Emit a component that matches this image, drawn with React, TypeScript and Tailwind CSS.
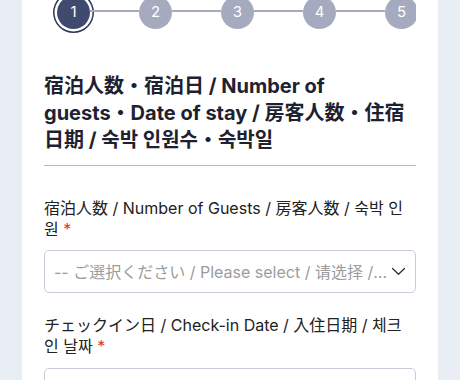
import React from "react";

const font = { fontFamily: '"Inter", "Noto Sans CJK JP", "Noto Sans CJK KR", sans-serif' };

function Stepper() {
  const steps = [1, 2, 3, 4, 5];
  return (
    <div className="h-[34px] overflow-hidden">
      <div className="-mt-[4px] flex items-start pl-[13px]">
        {steps.map((n, i) => (
          <React.Fragment key={n}>
            <div
              className={
                "flex h-[33px] w-[33px] shrink-0 items-center justify-center rounded-full text-[15px] text-white " +
                (n === 1
                  ? "bg-[#3f4a6e] shadow-[0_0_0_2.5px_#ffffff,0_0_0_4px_#2c3657]"
                  : "bg-[#a5aabf]")
              }
            >
              {n}
            </div>
            {i < steps.length - 1 && (
              <div className="mt-[13.5px] h-[2.5px] w-[49px] shrink-0 bg-[#a5aabf]" />
            )}
          </React.Fragment>
        ))}
      </div>
    </div>
  );
}

export default function App() {
  return (
    <div className="h-[380px] w-[460px] overflow-hidden bg-[#e9edf4]" style={font}>
      <div className="mx-[22px] h-full bg-white px-[22px]">
        <Stepper />
        <h2 className="mt-[39px] text-[20px] font-bold leading-[27px] text-[#1e2230]">
          宿泊人数・宿泊日 / Number of guests・Date of stay / 房客人数・住宿日期 / 숙박 인원수・숙박일
        </h2>
        <div className="mt-[11px] h-px bg-[#bcbcc0]" />
        <div className="mt-[32px]">
          <label className="block text-[16px] leading-[21px] text-[#222222]">
            宿泊人数 / Number of Guests / 房客人数 / 숙박 인원 <span className="text-[#e0333a]">*</span>
          </label>
          <div className="mt-[10px] flex h-[43px] items-center rounded-[5px] border border-[#c9ccd8] pl-[9px] pr-[9px]">
            <span className="min-w-0 flex-1 truncate text-[16px] text-[#9c9c9c]">
              -- ご選択ください / Please select / 请选择 / 선택해 주세요 --
            </span>
            <svg width="15" height="9" viewBox="0 0 15 9" className="ml-[2px] shrink-0">
              <path d="M1.5 1.5 L7.5 7.3 L13.5 1.5" fill="none" stroke="#2a2a2a" strokeWidth="1.2" strokeLinecap="round" strokeLinejoin="round" />
            </svg>
          </div>
        </div>
        <div className="mt-[22px]">
          <label className="block text-[16px] leading-[21px] text-[#222222]">
            チェックイン日 / Check-in Date / 入住日期 / 체크인 날짜 <span className="text-[#e0333a]">*</span>
          </label>
          <div className="mt-[11px] h-[43px] rounded-[5px] border border-[#c9ccd8]" />
        </div>
      </div>
    </div>
  );
}
